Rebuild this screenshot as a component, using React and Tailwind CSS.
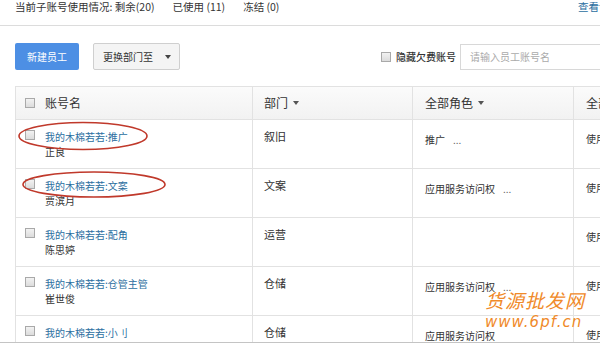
const rows = [
  { link: "我的木棉若若:推广", name: "正良", dept: "叙旧", role: "推广", more: true },
  { link: "我的木棉若若:文案", name: "贾滨月", dept: "文案", role: "应用服务访问权", more: true },
  { link: "我的木棉若若:配角", name: "陈思婷", dept: "运营", role: "", more: false },
  { link: "我的木棉若若:仓管主管", name: "崔世俊", dept: "仓储", role: "应用服务访问权", more: true },
  { link: "我的木棉若若:小刂", name: "李佳华", dept: "仓储", role: "应用服务访问权", more: false },
];

function Box() {
  return (
    <span className="inline-block w-[10px] h-[10px] border border-[#a9a9a9] bg-gradient-to-b from-[#f2f2f2] to-[#dcdcdc] shrink-0" />
  );
}

function Caret() {
  return (
    <span className="inline-block ml-[5px] w-0 h-0 border-l-[3px] border-r-[3px] border-t-[4px] border-l-transparent border-r-transparent border-t-[#555] align-middle" />
  );
}

export default function App() {
  return (
    <div
      className="relative w-[600px] h-[344px] overflow-hidden bg-white text-[#333]"
      style={{ fontFamily: '"Noto Sans CJK SC", "Liberation Sans", sans-serif' }}
    >
      <div className="w-[640px] h-[343px] overflow-hidden border-b border-[#c4c4c4]">
        {/* top usage line */}
        <div className="h-[26px] border-b border-[#dcdcdc] flex justify-between pl-[15px] pr-[20px] text-[10.5px] leading-[13px]">
          <div className="flex gap-[18px]">
            <span>当前子账号使用情况:&nbsp;剩余(20)</span>
            <span>已使用 (11)</span>
            <span>冻结 (0)</span>
          </div>
          <span className="text-[#2b6ea0]">查看详情</span>
        </div>

        {/* toolbar */}
        <div className="mt-[17px] h-[27px] flex items-center pl-[15px] text-[10px]">
          <button className="h-[27px] w-[64px] rounded-[2px] bg-[#4d8fe4] text-white">新建员工</button>
          <button className="ml-[14px] h-[27px] w-[87px] rounded-[2px] border border-[#cfcfcf] bg-[#f4f4f4] text-[#333] flex items-center pl-[9px]">
            更换部门至
            <span className="ml-[12px] w-0 h-0 border-l-[3px] border-r-[3px] border-t-[4px] border-l-transparent border-r-transparent border-t-[#444]" />
          </button>
          <div className="ml-auto flex items-center">
            <Box />
            <span className="ml-[5px] text-[#333] font-medium">隐藏欠费账号</span>
            <div className="ml-[4px] h-[26px] w-[180px] border border-[#d8d8d8] flex items-center pl-[9px] text-[#aaa]">
              请输入员工账号名
            </div>
          </div>
        </div>

        {/* table */}
        <div className="mt-[16px] ml-[15px] border-l border-t border-[#e2e2e2]">
          <div className="flex h-[33px] border-b border-[#e2e2e2] bg-gradient-to-b from-[#fbfbfb] to-[#f2f2f2] text-[12px]">
            <div className="w-[237px] border-r border-[#e2e2e2] flex items-center pl-[9px]">
              <Box />
              <span className="ml-[10px]">账号名</span>
            </div>
            <div className="w-[160px] border-r border-[#e2e2e2] flex items-center pl-[11px]">
              部门<Caret />
            </div>
            <div className="w-[161px] border-r border-[#e2e2e2] flex items-center pl-[12px]">
              全部角色<Caret />
            </div>
            <div className="flex-1 flex items-center pl-[12px]">全部状态</div>
          </div>

          {rows.map((r, i) => (
            <div key={i} className="flex h-[49px] border-b border-[#e2e2e2] text-[10px] leading-[15px]">
              <div className="w-[237px] border-r border-[#e2e2e2] flex items-start pl-[9px] pt-[10px]">
                <Box />
                <div className="ml-[10px] -mt-[1px]">
                  <div className="text-[#2b6ea0]">{r.link}</div>
                  <div>{r.name}</div>
                </div>
              </div>
              <div className="w-[160px] border-r border-[#e2e2e2] pl-[11px] pt-[9px] text-[11px]">
                {r.dept}
              </div>
              <div className="w-[161px] border-r border-[#e2e2e2] pl-[12px] pt-[12px]">
                {r.role}
                {r.more && <span className="ml-[8px] text-[#666]">...</span>}
              </div>
              <div className="flex-1 pl-[12px] pt-[11px]">使用中</div>
            </div>
          ))}
        </div>
      </div>

      {/* red annotation ellipses */}
      <svg className="absolute left-0 top-0 pointer-events-none" width="600" height="344">
        <ellipse cx="83" cy="136" rx="64" ry="13.5" fill="none" stroke="#c0392b" strokeWidth="1.6" />
        <ellipse cx="94" cy="184.5" rx="71" ry="12.5" fill="none" stroke="#c0392b" strokeWidth="1.6" />
      </svg>

      {/* watermark */}
      <div className="absolute left-[485px] top-[290px] text-[#f08a2a] leading-none italic pointer-events-none">
        <div className="text-[19px] tracking-[1px]">货源批发网</div>
        <div className="mt-[6px] text-[15px] tracking-[1px]" style={{ fontFamily: '"DejaVu Sans", sans-serif' }}>
          www.6pf.cn
        </div>
      </div>
    </div>
  );
}
